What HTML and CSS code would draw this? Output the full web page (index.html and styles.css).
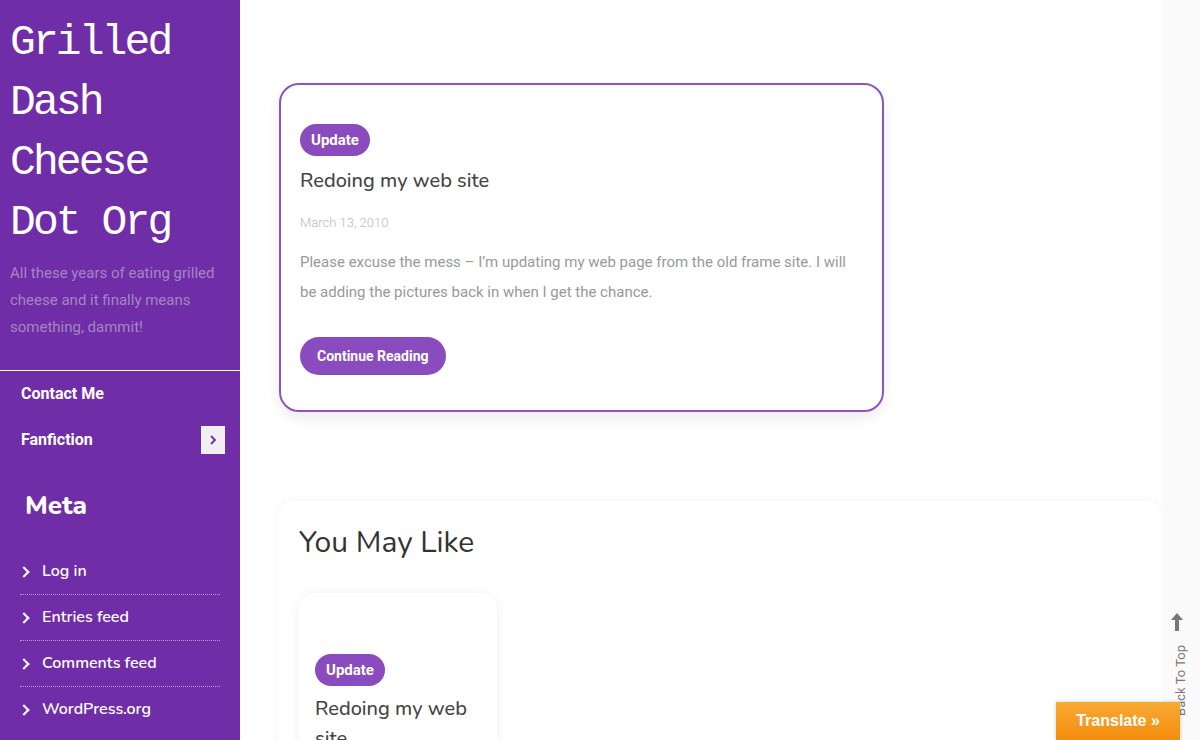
FILE: index.html
```html
<!DOCTYPE html>
<html lang="en">
<head>
    <meta charset="utf-8">
    <title>Grilled Dash Cheese Dot Org</title>
    <link rel="stylesheet" href="styles.css">
</head>
<body>
    <div class="page">
        <aside class="sidebar">
            <div class="branding">
                <h1 class="site-title">Grilled Dash Cheese Dot Org</h1>
                <p class="site-desc">All these years of eating grilled cheese and it finally means something, dammit!</p>
            </div>
            <nav class="side-nav">
                <a href="#">Contact Me</a>
                <div class="nav-row">
                    <a href="#">Fanfiction</a>
                    <span class="sub-toggle">
                        <svg width="10" height="12" viewBox="0 0 10 12"><path d="M3 2l4 4-4 4" fill="none" stroke="#6f2da8" stroke-width="1.8"/></svg>
                    </span>
                </div>
            </nav>
            <section class="widget">
                <h2>Meta</h2>
                <ul>
                    <li><a href="#">Log in</a></li>
                    <li><a href="#">Entries feed</a></li>
                    <li><a href="#">Comments feed</a></li>
                    <li><a href="#">WordPress.org</a></li>
                </ul>
            </section>
        </aside>

        <main class="content">
            <article class="post-card">
                <span class="badge">Update</span>
                <h2 class="post-title">Redoing my web site</h2>
                <div class="post-date">March 13, 2010</div>
                <p class="excerpt">Please excuse the mess – I’m updating my web page from the old frame site. I will be adding the pictures back in when I get the chance.</p>
                <a href="#" class="btn">Continue Reading</a>
            </article>

            <section class="related">
                <h2>You May Like</h2>
                <div class="related-card">
                    <span class="badge">Update</span>
                    <h3 class="post-title">Redoing my web site</h3>
                </div>
            </section>
        </main>

        <div class="back-top">
            <svg width="12" height="18" viewBox="0 0 12 18"><path d="M6 0L0 7h4v11h4V7h4z" fill="#777"/></svg>
            <span>Back To Top</span>
        </div>
        <a href="#" class="translate">Translate »</a>
    </div>
</body>
</html>
```

FILE: styles.css
```css
body {
    margin: 0;
    font-family: Roboto, Arial, sans-serif;
    background: #fff;
    overflow: hidden;
}
a {
    text-decoration: none;
    color: inherit;
}
.page {
    display: flex;
    height: 740px;
}

/* sidebar */
.sidebar {
    width: 240px;
    flex-shrink: 0;
    background: #6f2da8;
    color: #fff;
}
.branding {
    padding: 13px 10px 29px 10px;
}
.site-title {
    margin: 0;
    font-family: "Liberation Mono", "Courier New", monospace;
    font-weight: normal;
    font-size: 43px;
    letter-spacing: -2.9px;
    line-height: 60px;
}
.site-desc {
    margin: 7px 0 0;
    font-size: 15px;
    line-height: 27px;
    color: #a386c2;
}
.side-nav {
    border-top: 1px solid #fff;
    padding: 0 15px 0 21px;
}
.side-nav a {
    display: block;
    font-weight: 700;
    font-size: 16px;
    line-height: 46px;
}
.nav-row {
    display: flex;
    justify-content: space-between;
    align-items: center;
}
.sub-toggle {
    width: 24px;
    height: 28px;
    background: #f1eff4;
    display: flex;
    align-items: center;
    justify-content: center;
}
.widget {
    padding: 0 20px;
}
.widget h2 {
    margin: 25px 0 26px 5px;
    font-family: Nunito, Lato, sans-serif;
    font-size: 26px;
    font-weight: 800;
}
.widget ul {
    list-style: none;
    margin: 0;
    padding: 0;
}
.widget li {
    font-family: Nunito, Lato, sans-serif;
    font-weight: 600;
    font-size: 16px;
    line-height: 45px;
    border-bottom: 1px dotted #b99bd6;
    display: flex;
    align-items: center;
}
.widget li:last-child {
    border-bottom: none;
}
.widget li::before {
    content: "";
    width: 6px;
    height: 6px;
    border-top: 2px solid #fff;
    border-right: 2px solid #fff;
    transform: rotate(45deg);
    margin: 0 14px 0 0;
}

/* main */
.content {
    flex: 1;
    padding: 83px 38px 0 38px;
}
.post-card {
    width: 563px;
    border: 2px solid #8e53c2;
    border-radius: 20px;
    padding: 39px 19px 35px 19px;
    box-shadow: 0 6px 14px rgba(0, 0, 0, 0.08);
    margin-left: 1px;
}
.badge {
    display: inline-block;
    background: #8a4bbf;
    color: #fff;
    font-weight: 700;
    font-size: 15px;
    line-height: 32px;
    padding: 0 11px;
    border-radius: 16px;
}
.post-title {
    margin: 10px 0 0;
    font-family: Nunito, Lato, sans-serif;
    font-weight: 500;
    font-size: 20px;
    line-height: 30px;
    color: #444;
}
.post-date {
    margin-top: 19px;
    font-size: 13px;
    color: #bbb;
    font-weight: 300;
}
.excerpt {
    margin: 17px 0 0;
    font-size: 15px;
    line-height: 30px;
    color: #999;
}
.btn {
    display: inline-block;
    margin-top: 30px;
    background: #8a4bbf;
    color: #fff;
    font-weight: 700;
    font-size: 14px;
    line-height: 38px;
    padding: 0 17px;
    border-radius: 19px;
}
.related {
    margin-top: 89px;
    background: #fff;
    border-radius: 16px;
    box-shadow: 0 0 12px rgba(0, 0, 0, 0.05);
    padding: 22px 21px 40px;
}
.related h2 {
    margin: 0;
    font-family: Nunito, Lato, sans-serif;
    font-weight: 400;
    font-size: 30px;
    line-height: 40px;
    color: #333;
}
.related-card {
    margin-top: 30px;
    width: 166px;
    padding: 61px 16px 20px;
    border-radius: 16px;
    box-shadow: 0 0 12px rgba(0, 0, 0, 0.06);
}
.related-card .post-title {
    margin-top: 8px;
}

/* fixed bits */
.back-top {
    position: absolute;
    right: 0;
    top: 0;
    width: 38px;
    height: 740px;
    background: #fafafa;
    display: flex;
    flex-direction: column;
    align-items: center;
    justify-content: flex-end;
    padding-bottom: 24px;
    padding-right: 8px;
    box-sizing: border-box;
    color: #777;
    font-size: 13px;
}
.back-top span {
    writing-mode: vertical-rl;
    transform: rotate(180deg);
    margin-top: 14px;
    margin-left: 6px;
}
.translate {
    position: absolute;
    left: 1056px;
    top: 702px;
    width: 124px;
    height: 38px;
    background: linear-gradient(#f8aa35, #f48c0c);
    color: #fff;
    font-family: Arial, "Liberation Sans", sans-serif;
    font-weight: 700;
    font-size: 16px;
    line-height: 38px;
    text-align: center;
    box-shadow: 0 0 4px rgba(0, 0, 0, 0.2);
}
```
